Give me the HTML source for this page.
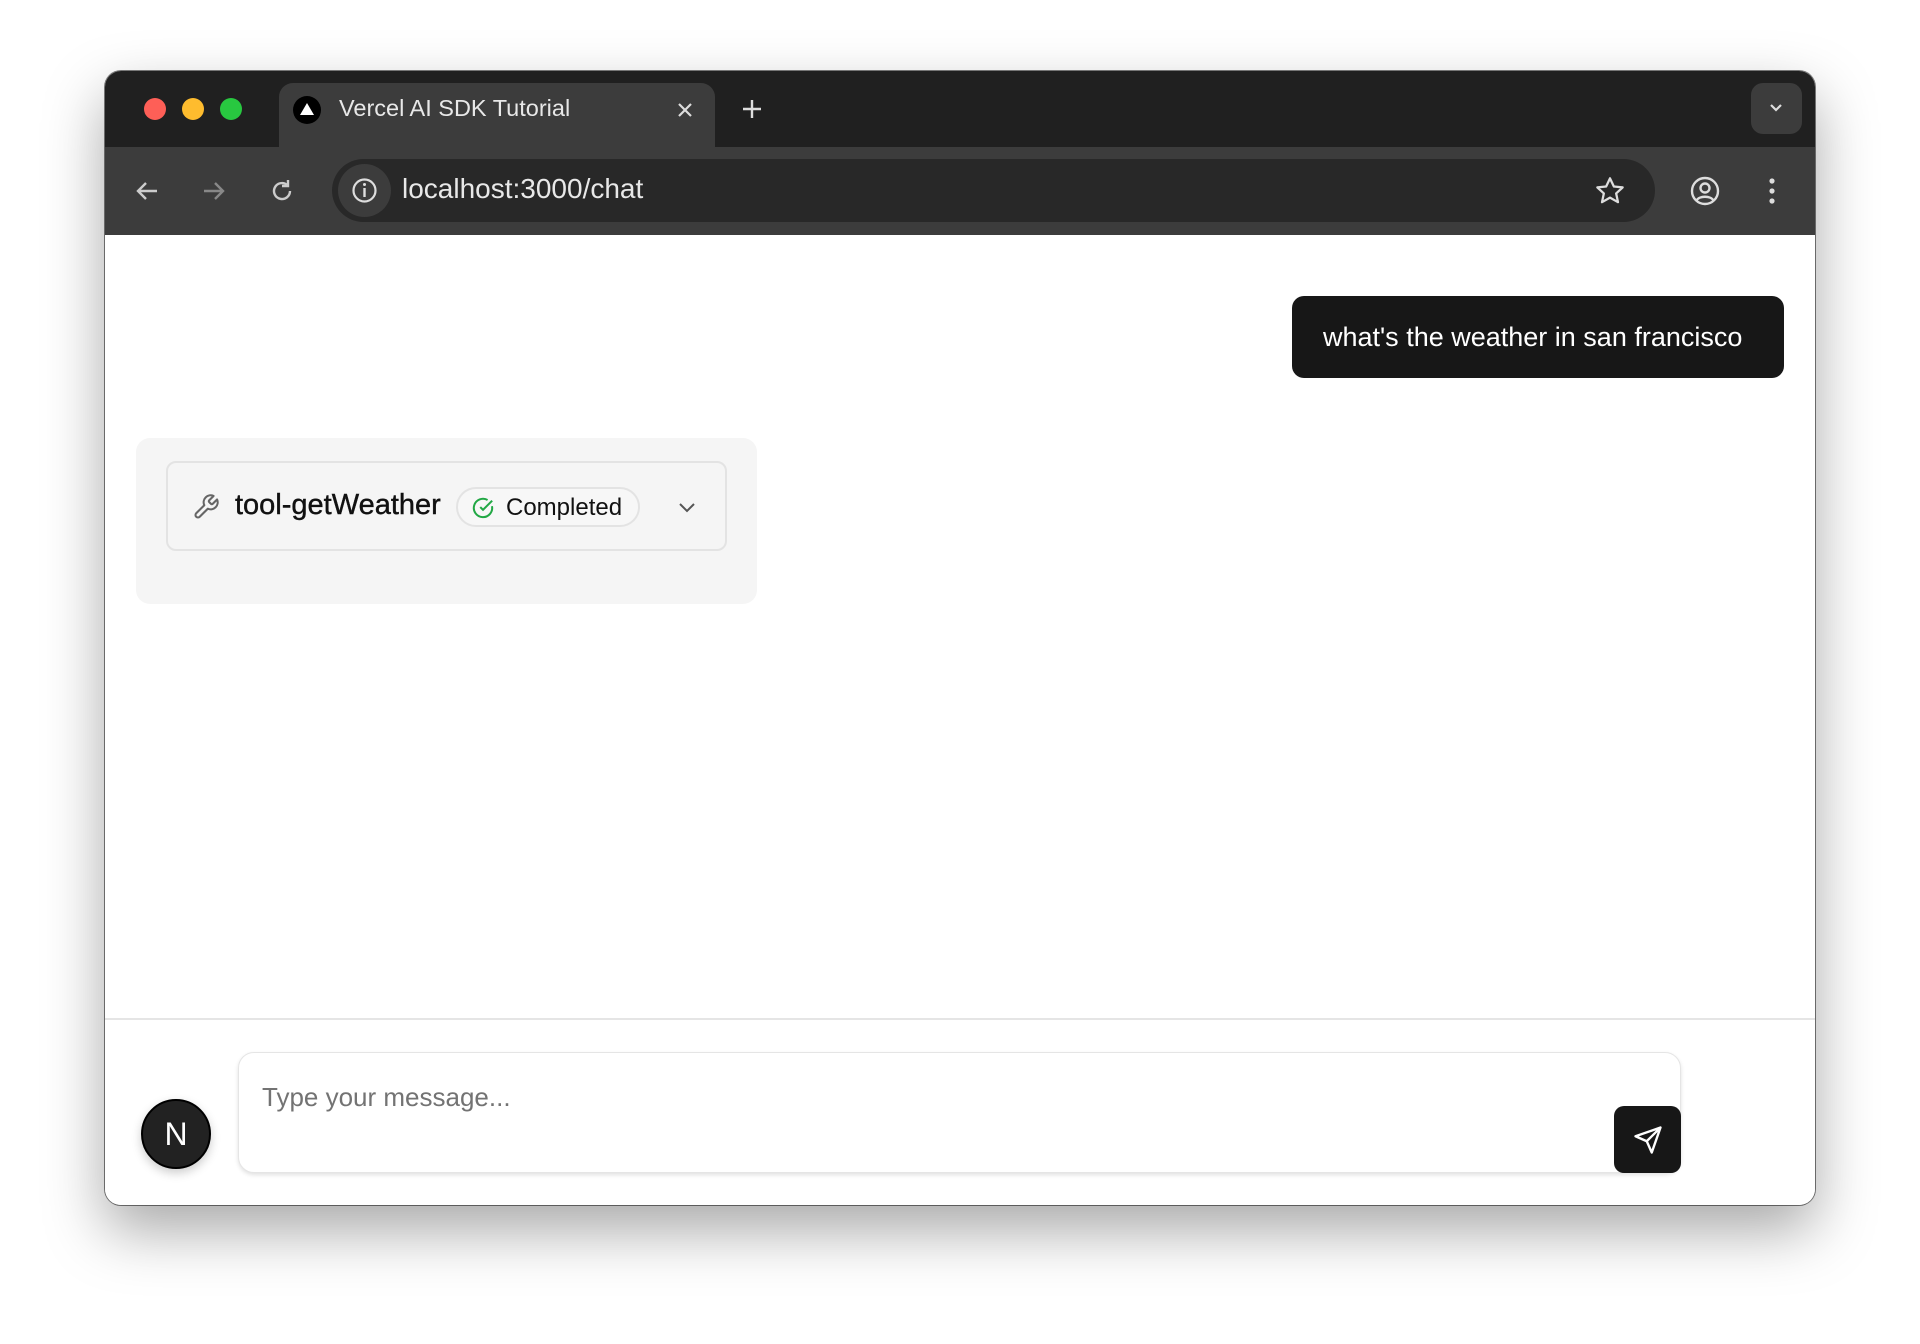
<!DOCTYPE html>
<html><head><meta charset="utf-8"><style>
*{box-sizing:border-box;margin:0;padding:0}
body{width:1920px;height:1344px;background:#fff;position:relative;overflow:hidden;font-family:"Liberation Sans",sans-serif}
.win{position:absolute;left:105px;top:71px;width:1710px;height:1134px;border-radius:16px;overflow:hidden;background:#fff;box-shadow:0 25px 60px rgba(0,0,0,.35),0 0 0 1px rgba(0,0,0,.5)}
.tabbar{position:absolute;left:0;top:0;width:100%;height:77px;background:#202020}
.dot{position:absolute;top:27px;width:22px;height:22px;border-radius:50%}
.tab{position:absolute;left:174px;top:12px;width:436px;height:70px;background:#3c3c3c;border-radius:14px 14px 0 0}
.toolbar{position:absolute;left:0;top:76px;width:100%;height:88px;background:#3c3c3c}
.url{position:absolute;left:227px;top:12px;width:1323px;height:63px;background:#282828;border-radius:32px}
.content{position:absolute;left:0;top:164px;width:100%;height:970px;background:#fff}
svg{position:absolute}
</style></head><body>
<div class="win">
 <div class="tabbar">
  <div class="dot" style="left:39px;background:#fe5f57"></div>
  <div class="dot" style="left:77px;background:#febc2e"></div>
  <div class="dot" style="left:115px;background:#28c840"></div>
  <div class="tab">
   <div style="position:absolute;left:14px;top:13px;width:28px;height:28px;border-radius:50%;background:#000"></div>
   <svg style="left:20px;top:18px" width="16" height="16" viewBox="0 0 16 16"><path d="M8 2L15 14H1Z" fill="#fff"/></svg>
   <div style="position:absolute;left:60px;top:12px;color:#e8e8e8;font-size:23.5px">Vercel AI SDK Tutorial</div>
   <svg style="left:396px;top:17px" width="20" height="20" viewBox="0 0 20 20"><path d="M4 4L16 16M16 4L4 16" stroke="#ddd" stroke-width="2.2"/></svg>
  </div>
  <svg style="left:635px;top:26px" width="24" height="24" viewBox="0 0 24 24"><path d="M12 3V21M3 12H21" stroke="#ddd" stroke-width="2.4"/></svg>
  <div style="position:absolute;left:1646px;top:12px;width:51px;height:51px;border-radius:12px;background:#3c3c3c"></div>
  <svg style="left:1661px;top:27px" width="20" height="20" viewBox="0 0 20 20"><path d="M5 7L10 12L15 7" stroke="#ddd" stroke-width="2.2" fill="none"/></svg>
 </div>
 <div class="toolbar">
  <svg style="left:28px;top:30px" width="28" height="28" viewBox="0 0 28 28"><path d="M24 14H5M13 6L5 14L13 22" stroke="#ccc" stroke-width="2.4" fill="none"/></svg>
  <svg style="left:95px;top:30px" width="28" height="28" viewBox="0 0 28 28"><path d="M4 14H23M15 6L23 14L15 22" stroke="#888" stroke-width="2.4" fill="none"/></svg>
  <svg style="left:163px;top:30px" width="28" height="28" viewBox="0 0 28 28"><path d="M22 14A8 8 0 1 1 19 7.8" stroke="#ccc" stroke-width="2.4" fill="none"/><path d="M20 3V9H14" stroke="#ccc" stroke-width="2.4" fill="none"/></svg>
  <div class="url">
   <div style="position:absolute;left:6px;top:5px;width:53px;height:53px;border-radius:50%;background:#3c3c3c"></div>
   <svg style="left:18px;top:17px" width="29" height="29" viewBox="0 0 29 29"><circle cx="14.5" cy="14.5" r="11" stroke="#ddd" stroke-width="2.2" fill="none"/><path d="M14.5 12V21" stroke="#ddd" stroke-width="2.4"/><circle cx="14.5" cy="8.5" r="1.5" fill="#ddd"/></svg>
   <div style="position:absolute;left:70px;top:14px;color:#e8e8e8;font-size:28px">localhost:3000/chat</div>
   <svg style="left:1262px;top:16px" width="32" height="32" viewBox="0 0 24 24"><path d="M12 2.5L14.9 8.6L21.5 9.3L16.6 13.8L18 20.4L12 17L6 20.4L7.4 13.8L2.5 9.3L9.1 8.6Z" stroke="#ddd" stroke-width="1.7" fill="none" stroke-linejoin="round"/></svg>
  </div>
  <svg style="left:1584px;top:28px" width="32" height="32" viewBox="0 0 32 32"><circle cx="16" cy="16" r="13" stroke="#ddd" stroke-width="2.4" fill="none"/><circle cx="16" cy="13" r="4.5" stroke="#ddd" stroke-width="2.4" fill="none"/><path d="M7.5 25.5C10 20.5 22 20.5 24.5 25.5" stroke="#ddd" stroke-width="2.4" fill="none"/></svg>
  <svg style="left:1660px;top:28px" width="14" height="32" viewBox="0 0 14 32"><circle cx="7" cy="6" r="2.6" fill="#ddd"/><circle cx="7" cy="16" r="2.6" fill="#ddd"/><circle cx="7" cy="26" r="2.6" fill="#ddd"/></svg>
 </div>
 <div class="content">
  <div style="position:absolute;left:1187px;top:61px;width:492px;height:82px;background:#171717;border-radius:12px;color:#fff;font-size:27px;line-height:82px;padding-left:31px;white-space:nowrap">what's the weather in san francisco</div>
  <div style="position:absolute;left:31px;top:203px;width:621px;height:166px;background:#f5f5f5;border-radius:14px">
   <div style="position:absolute;left:30px;top:23px;width:561px;height:90px;border:2px solid #e3e3e3;border-radius:10px">
    <svg style="left:24px;top:30px" width="28" height="28" viewBox="0 0 24 24"><path d="M14.7 6.3a1 1 0 0 0 0 1.4l1.6 1.6a1 1 0 0 0 1.4 0l3.77-3.77a6 6 0 0 1-7.940 7.94l-6.91 6.91a2.12 2.12 0 0 1-3-3l6.91-6.91a6 6 0 0 1 7.94-7.94l-3.76 3.76z" stroke="#666" stroke-width="1.8" fill="none" stroke-linejoin="round"/></svg>
    <div style="position:absolute;left:67px;top:26px;font-size:29px;color:#111;white-space:nowrap;-webkit-text-stroke:0.4px #111">tool-getWeather</div>
    <div style="position:absolute;left:288px;top:24px;width:184px;height:40px;border:2px solid #e3e3e3;border-radius:20px;background:#f7f7f7">
     <svg style="left:14px;top:8px" width="22" height="22" viewBox="0 0 24 24"><path d="M21.8 10A10 10 0 1 1 17 3.3" stroke="#22a845" stroke-width="2.2" fill="none"/><path d="M9 11L12 14L22 4" stroke="#22a845" stroke-width="2.2" fill="none"/></svg>
     <div style="position:absolute;left:48px;top:5px;font-size:24px;color:#111;white-space:nowrap">Completed</div>
    </div>
    <svg style="left:508px;top:33px" width="22" height="22" viewBox="0 0 22 22"><path d="M4 8L11 15L18 8" stroke="#555" stroke-width="2" fill="none"/></svg>
   </div>
  </div>
  <div style="position:absolute;left:0;top:783px;width:100%;height:2px;background:#e5e5e5"></div>
  <div style="position:absolute;left:133px;top:817px;width:1443px;height:121px;border:1px solid #e5e5e5;border-radius:16px;background:#fff;box-shadow:0 2px 4px rgba(0,0,0,.12)">
   <div style="position:absolute;left:23px;top:29px;font-size:26px;color:#737373">Type your message...</div>
   <div style="position:absolute;left:1375px;top:53px;width:67px;height:67px;background:#171717;border-radius:10px"></div>
   <svg style="left:1394px;top:72px" width="30" height="30" viewBox="0 0 24 24"><path d="M22 2L11 13M22 2L15 22L11 13L2 9Z" stroke="#fff" stroke-width="1.9" fill="none" stroke-linejoin="round"/></svg>
  </div>
  <div style="position:absolute;left:36px;top:864px;width:70px;height:70px;border-radius:50%;background:#222;border:2px solid #000;box-shadow:0 4px 10px rgba(0,0,0,.2);color:#fff;font-size:32px;text-align:center;line-height:66px">N</div>
 </div>
</div>
</body></html>
